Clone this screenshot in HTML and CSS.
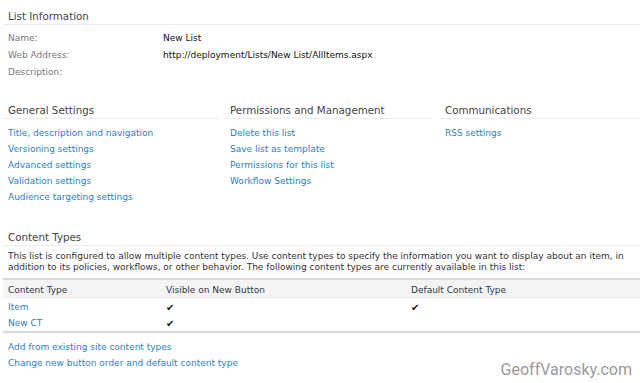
FILE: index.html
```html
<!DOCTYPE html>
<html>
<head>
<meta charset="utf-8">
<link rel="stylesheet" href="styles.css">
</head>
<body>
<div class="page">
  <section class="info">
    <h2 class="hd">List Information</h2>
    <div class="props">
      <div class="lbl">Name:</div><div class="val">New List</div>
      <div class="lbl">Web Address:</div><div class="val">http://deployment/Lists/New List/AllItems.aspx</div>
      <div class="lbl">Description:</div><div class="val"></div>
    </div>
  </section>

  <section class="settings">
    <div class="col">
      <h2 class="hd">General Settings</h2>
      <ul class="links">
        <li><a>Title, description and navigation</a></li>
        <li><a>Versioning settings</a></li>
        <li><a>Advanced settings</a></li>
        <li><a>Validation settings</a></li>
        <li><a>Audience targeting settings</a></li>
      </ul>
    </div>
    <div class="col">
      <h2 class="hd">Permissions and Management</h2>
      <ul class="links">
        <li><a>Delete this list</a></li>
        <li><a>Save list as template</a></li>
        <li><a>Permissions for this list</a></li>
        <li><a>Workflow Settings</a></li>
      </ul>
    </div>
    <div class="col">
      <h2 class="hd">Communications</h2>
      <ul class="links">
        <li><a>RSS settings</a></li>
      </ul>
    </div>
  </section>

  <section class="ctypes">
    <h2 class="hd">Content Types</h2>
    <p class="desc">This list is configured to allow multiple content types. Use content types to specify the information you want to display about an item, in addition to its policies, workflows, or other behavior. The following content types are currently available in this list:</p>
    <table class="ct">
      <thead>
        <tr><th class="c1">Content Type</th><th class="c2">Visible on New Button</th><th class="c3">Default Content Type</th></tr>
      </thead>
      <tbody>
        <tr><td><a>Item</a></td><td class="chk">&#10004;</td><td class="chk">&#10004;</td></tr>
        <tr><td><a>New CT</a></td><td class="chk">&#10004;</td><td></td></tr>
      </tbody>
    </table>
    <ul class="links bottom">
      <li><a>Add from existing site content types</a></li>
      <li><a>Change new button order and default content type</a></li>
    </ul>
  </section>
</div>
<div class="watermark">GeoffVarosky.com</div>
</body>
</html>
```
FILE: styles.css
```css
html, body {
  margin: 0;
  padding: 0;
  background: #fff;
}
body {
  font-family: "DejaVu Sans", Verdana, sans-serif;
  font-size: 9px;
  color: #222;
  position: relative;
  width: 640px;
  height: 383px;
  overflow: hidden;
}
.page {
  padding: 9px 0 0 3px;
}
.hd {
  margin: 0;
  font-weight: normal;
  font-size: 10.3px;
  color: #444;
  line-height: 14px;
  padding: 0 0 1px 5px;
  border-bottom: 1px solid #ececec;
}
.props {
  display: grid;
  grid-template-columns: 155px 1fr;
  padding: 5px 0 0 5px;
}
.props > div {
  line-height: 17px;
  height: 17px;
}
.lbl { color: #777; }
.val { color: #111; }

.settings {
  display: grid;
  grid-template-columns: 215px 208px 1fr;
  column-gap: 7px;
  margin-top: 22px;
}
.links {
  list-style: none;
  margin: 0;
  padding: 6px 0 0 5px;
}
.links li {
  line-height: 16px;
  height: 16px;
}
a {
  color: #2f7dc5;
  text-decoration: none;
}
.ctypes {
  margin-top: 25px;
}
.desc {
  margin: 0;
  padding: 5px 0 0 5px;
  line-height: 11px;
  color: #333;
  width: 628px;
}
.ct {
  width: 100%;
  border-collapse: collapse;
  margin-top: 5px;
  border-top: 2px solid #d7dbe0;
  border-bottom: 2px solid #d7dbe0;
}
.ct th {
  background: #f4f4f4;
  font-weight: normal;
  text-align: left;
  color: #2a3a4a;
  height: 19px;
  padding: 0;
}
.ct td {
  height: 15px;
  padding: 1px 0 0 0;
  line-height: 15px;
}
.ct th.c1, .ct td:first-child { padding-left: 5px; width: 158px; }
.ct th.c2, .ct td:nth-child(2) { width: 245px; }
.chk {
  font-size: 10px;
  color: #111;
}
.bottom {
  padding-top: 6px;
}
.watermark {
  position: absolute;
  right: 8px;
  bottom: 4px;
  font-family: Roboto, "Liberation Sans", sans-serif;
  font-size: 16px;
  color: #9a9a9a;
}
```
